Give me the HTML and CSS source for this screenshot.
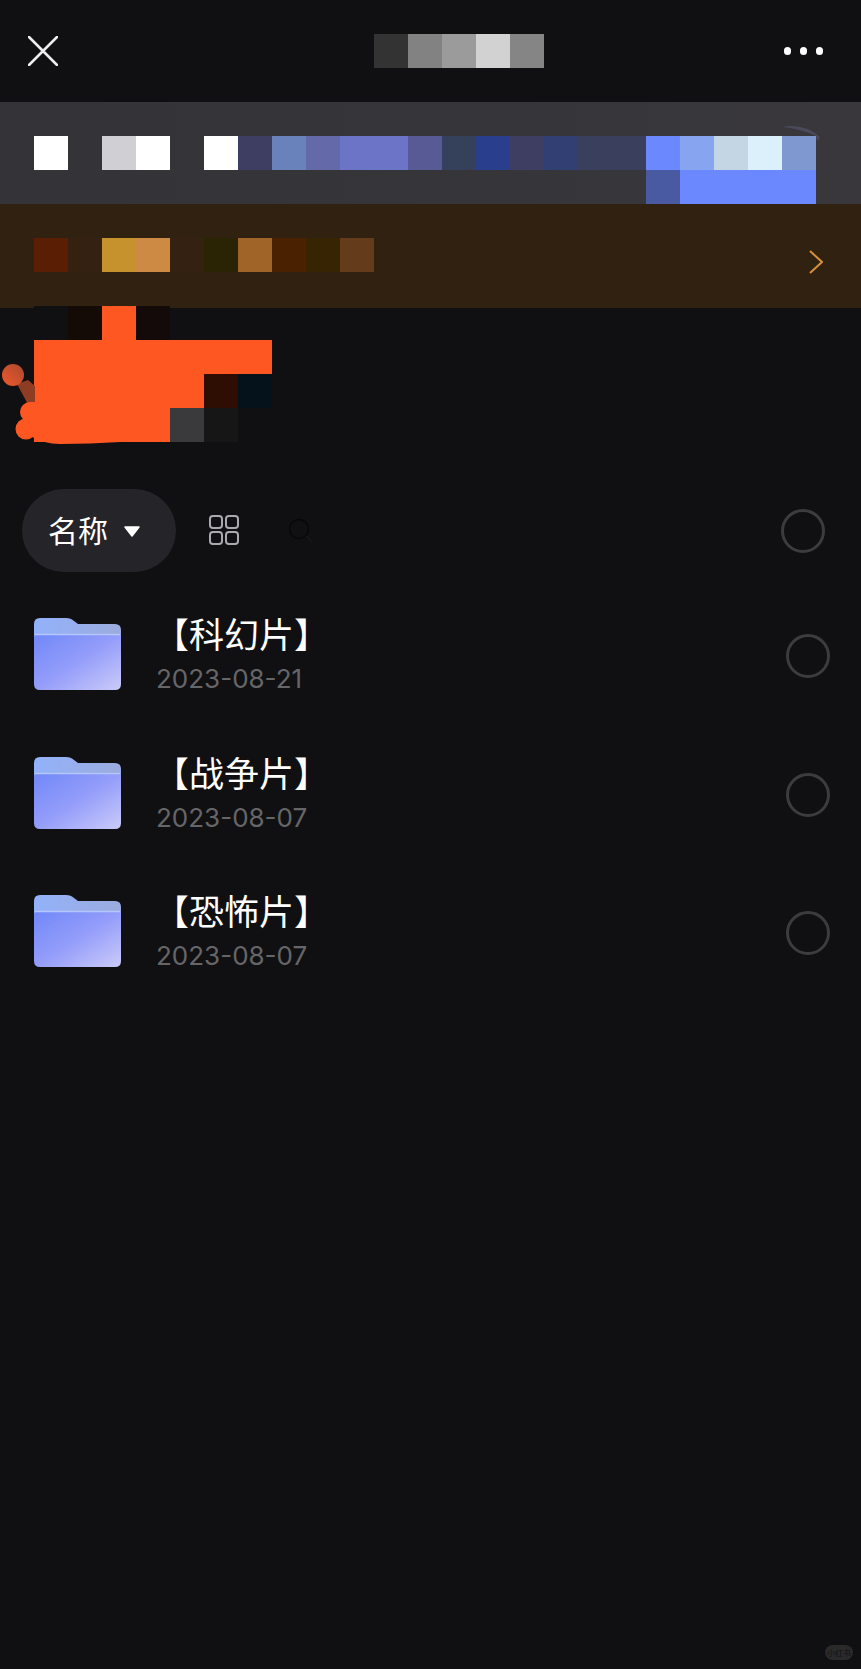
FILE: index.html
```html
<!DOCTYPE html>
<html lang="zh">
<head>
<meta charset="utf-8">
<title>文件夹</title>
<link rel="stylesheet" href="styles.css">
</head>
<body>
<div class="page">
  <header class="topbar">
    <svg class="close" viewBox="0 0 30 30" aria-hidden="true"><path d="M1 1 29 29M29 1 1 29"/></svg>
    <div class="mosaic title-mosaic">
      <i class="g1"></i><i class="g2"></i><i class="g3"></i><i class="g4"></i><i class="g5"></i>
    </div>
    <div class="dots"><b></b><b></b><b></b></div>
  </header>

  <section class="banner banner-grey">
    <div class="mosaic-stack">
      <div class="mosaic">
        <i class="w"></i><i></i><i class="s1"></i><i class="w"></i><i></i><i class="w"></i>
        <i class="b1"></i><i class="b2"></i><i class="b3"></i><i class="b4"></i><i class="b4"></i><i class="b5"></i>
        <i class="b6"></i><i class="b7"></i><i class="b1"></i><i class="b8"></i><i class="b9"></i><i class="b9"></i>
        <i class="b10"></i><i class="b11"></i><i class="b12"></i><i class="b13"></i><i class="b14"></i>
      </div>
      <div class="mosaic second-row">
        <i class="b15"></i><i class="b10"></i><i class="b10"></i><i class="b10"></i><i class="b10"></i>
      </div>
    </div>
    <svg class="arc" viewBox="0 0 40 20" aria-hidden="true"><path d="M0 2Q22 -2 38 12L35 16 34 11Q20 4 0 2Z"/></svg>
  </section>

  <section class="banner banner-brown">
    <div class="mosaic">
      <i class="o1"></i><i class="o0"></i><i class="o2"></i><i class="o3"></i><i class="o0"></i><i class="o4"></i><i class="o5"></i><i class="o6"></i><i class="o7"></i><i class="o8"></i>
    </div>
    <svg class="chevron" viewBox="0 0 14 24" aria-hidden="true"><path d="M1 1 13 12 1 23"/></svg>
  </section>

  <section class="redacted">
    <svg class="scribble" viewBox="0 0 120 90" aria-hidden="true">
      <defs>
        <linearGradient id="blob-fade" x1="0" y1="1" x2="1" y2="0">
          <stop offset="0" stop-color="#f0582a"/><stop offset="1" stop-color="#a84a30"/>
        </linearGradient>
      </defs>
      <path d="M17 22 28 18 35 24V48H31Z" class="blob-tail"/>
      <circle cx="13" cy="13" r="11" fill="url(#blob-fade)"/>
      <circle cx="30" cy="50" r="10" class="blob"/>
      <circle cx="26" cy="67" r="10.500" class="blob"/>
      <path d="M30 40H120V80Q90 82 60 82Q44 82 30 74Z" class="blob"/>
    </svg>
    <div class="mosaic"><i class="n0"></i><i class="n6"></i><i class="r"></i><i class="n1"></i></div>
    <div class="mosaic"><i class="r"></i><i class="r"></i><i class="r"></i><i class="r"></i><i class="r"></i><i class="r"></i><i class="r"></i></div>
    <div class="mosaic"><i class="r"></i><i class="r"></i><i class="r"></i><i class="r"></i><i class="r"></i><i class="n2"></i><i class="n3"></i></div>
    <div class="mosaic"><i class="r"></i><i class="r"></i><i class="r"></i><i class="r"></i><i class="r2"></i><i class="n4"></i></div>
  </section>

  <section class="toolbar">
    <div class="sort-pill">
      <span class="sort-label">名称</span>
      <svg class="caret" viewBox="0 0 18 11" aria-hidden="true"><path d="M2 1H16L9 10Z"/></svg>
    </div>
    <svg class="grid-icon" viewBox="0 0 30 30" aria-hidden="true">
      <rect x="1" y="1" width="12" height="12" rx="3"/><rect x="17" y="1" width="12" height="12" rx="3"/>
      <rect x="1" y="17" width="12" height="12" rx="3"/><rect x="17" y="17" width="12" height="12" rx="3"/>
    </svg>
    <svg class="search-icon" viewBox="0 0 28 28" aria-hidden="true"><circle cx="12" cy="12" r="9.500"/><path d="M19 19 25 25"/></svg>
    <span class="radio toolbar-radio"></span>
  </section>

  <ul class="list">
    <li class="row">
      <svg class="folder" viewBox="0 0 87 72" aria-hidden="true"><use href="#folder-shape"/></svg>
      <div class="meta"><div class="name">【科幻片】</div><div class="date">2023-08-21</div></div>
      <span class="radio"></span>
    </li>
    <li class="row">
      <svg class="folder" viewBox="0 0 87 72" aria-hidden="true"><use href="#folder-shape"/></svg>
      <div class="meta"><div class="name">【战争片】</div><div class="date">2023-08-07</div></div>
      <span class="radio"></span>
    </li>
    <li class="row">
      <svg class="folder" viewBox="0 0 87 72" aria-hidden="true"><use href="#folder-shape"/></svg>
      <div class="meta"><div class="name">【恐怖片】</div><div class="date">2023-08-07</div></div>
      <span class="radio"></span>
    </li>
  </ul>

  <div class="watermark">小红书</div>

  <svg class="defs" width="0" height="0" aria-hidden="true">
    <defs>
      <linearGradient id="fold-back" x1="0" y1="0" x2="1" y2="0">
        <stop offset="0" stop-color="#93b2fb"/><stop offset="1" stop-color="#9babdd"/>
      </linearGradient>
      <linearGradient id="fold-front" x1="0" y1="0" x2="1" y2="1">
        <stop offset="0" stop-color="#7088f8"/><stop offset="0.5" stop-color="#949dfa"/><stop offset="1" stop-color="#cbcbf9"/>
      </linearGradient>
      <g id="folder-shape">
        <path fill="url(#fold-back)" d="M0 6Q0 0 6 0H32Q37 0 40 3L44 6H81Q87 6 87 12V30H0Z"/>
        <path fill="url(#fold-front)" d="M0 20Q0 16 5 16H82Q87 16 87 20V66Q87 72 81 72H6Q0 72 0 66Z"/>
        <path fill="none" stroke="#b4c6fb" stroke-width="1.500" d="M1 16.500H86"/>
      </g>
    </defs>
  </svg>
</div>
</body>
</html>
```
FILE: styles.css
```css
* { box-sizing: border-box; }
html, body { margin: 0; padding: 0; background: #101012; }
.page {
  position: relative;
  width: 861px;
  height: 1669px;
  overflow: hidden;
  background: #101012;
  color: #fff;
  font-family: "Inter", "Noto Sans CJK SC", sans-serif;
}

/* mosaic blocks: each cell is 34px */
.mosaic { display: flex; height: 34px; }
.mosaic i { display: block; flex: 0 0 34px; height: 34px; }

.g1 { background: #333334; }
.g2 { background: #828282; }
.g3 { background: #9b9b9b; }
.g4 { background: #d2d2d2; }
.g5 { background: #858585; }

.w { background: #fff; }
.s1 { background: #cfcfd4; }
.b1 { background: #3e3e62; }
.b2 { background: #6a82bb; }
.b3 { background: #6369a9; }
.b4 { background: #6c74c8; }
.b5 { background: #585a96; }
.b6 { background: #35405a; }
.b7 { background: #2a3e8e; }
.b8 { background: #323f72; }
.b9 { background: #3a3f5e; }
.b10 { background: #6c88ff; }
.b11 { background: #86a4f0; }
.b12 { background: #c4d6e4; }
.b13 { background: #dcf0fc; }
.b14 { background: #8098d0; }
.b15 { background: #4a5aa2; }

.o0 { background: #342111; }
.o1 { background: #5a1e04; }
.o2 { background: #c6922e; }
.o3 { background: #cc8a44; }
.o4 { background: #2a2404; }
.o5 { background: #a06428; }
.o6 { background: #4a2202; }
.o7 { background: #362402; }
.o8 { background: #643c1c; }

.r { background: #ff5722; }
.r2 { background: #3a3a3c; }
.n0 { background: #101012; }
.n1 { background: #140a0a; }
.n2 { background: #2e0e02; }
.n3 { background: #05121c; }
.n4 { background: #161616; }
.n6 { background: #140a06; }

/* top bar */
.topbar {
  position: relative;
  display: flex;
  align-items: center;
  justify-content: space-between;
  height: 102px;
  padding: 0 38px 0 28px;
  background: #101012;
}
.close { width: 30px; height: 30px; }
.close path { fill: none; stroke: #eee; stroke-width: 2.500; stroke-linecap: round; }
.title-mosaic { position: absolute; left: 374px; top: 34px; }
.dots { display: flex; gap: 8.500px; }
.dots b { display: block; width: 7.500px; height: 7.500px; border-radius: 50%; background: #fff; }

/* banners */
.banner { position: relative; display: flex; }
.banner-grey {
  height: 102px;
  padding: 34px 0 0 34px;
  background: linear-gradient(90deg, #333338 0%, #36363a 60%, #39373b 100%);
}
.mosaic-stack { display: flex; flex-direction: column; }
.second-row { margin-left: 612px; }
.arc { position: absolute; left: 782px; top: 23px; width: 40px; height: 20px; }
.arc path { fill: #4a4a5c; }

.banner-brown {
  height: 104px;
  padding: 34px 0 0 34px;
  background: #312110;
}
.chevron { position: absolute; left: 809px; top: 46px; width: 14px; height: 24px; }
.chevron path { fill: none; stroke: #d8913a; stroke-width: 2; }

/* redacted block */
.redacted {
  position: relative;
  margin-top: -2px;
  padding-left: 34px;
}
.scribble { position: absolute; left: 0; top: 56px; width: 120px; height: 90px; }
.blob { fill: #ff5722; }
.blob-tail { fill: #8e3c24; }

/* toolbar */
.toolbar {
  display: flex;
  align-items: center;
  height: 83px;
  margin-top: 47px;
  padding-left: 22px;
}
.sort-pill {
  display: flex;
  align-items: center;
  width: 154px;
  height: 83px;
  padding-left: 26px;
  border-radius: 42px;
  background: #252429;
  font-family: "Noto Sans CJK SC", sans-serif;
  font-size: 30px;
}
.sort-label { margin-top: -3px; }
.caret { width: 18px; height: 11px; margin-left: 15px; margin-top: 1px; }
.caret path { fill: #fff; stroke: #fff; stroke-width: 1.500; stroke-linejoin: round; }
.grid-icon { width: 30px; height: 30px; margin-left: 33px; margin-top: -2px; }
.grid-icon rect { fill: none; stroke: #aaaaae; stroke-width: 2; }
.search-icon { width: 28px; height: 28px; margin-left: 48px; margin-top: 1px; }
.search-icon circle { fill: none; stroke: #08080a; stroke-width: 1.500; }
.search-icon path { fill: none; stroke: #161618; stroke-width: 1.500; }
.radio {
  display: block;
  flex: none;
  width: 44px;
  height: 44px;
  margin-top: 4px;
  margin-left: auto;
  margin-right: 31px;
  border: 3.500px solid #3c3c3e;
  border-radius: 50%;
}
.toolbar-radio { margin-top: 0; margin-right: 36px; }

/* list */
.list { list-style: none; margin: 13px 0 0; padding: 0; }
.row {
  display: flex;
  align-items: center;
  height: 138.500px;
  padding-left: 34px;
}
.folder { flex: none; width: 87px; height: 72px; }
.meta { margin-left: 35px; }
.name {
  height: 48px;
  margin-left: -2px;
  font-family: "Noto Sans CJK SC", sans-serif;
  font-size: 35px;
  line-height: 48px;
}
.date {
  margin-top: 2px;
  font-size: 26px;
  line-height: 40px;
  color: #666668;
}

.watermark {
  position: absolute;
  left: 825px;
  top: 1645px;
  width: 28px;
  height: 15px;
  border-radius: 8px;
  background: #2a2a2b;
  color: #101012;
  font-family: "Noto Sans CJK SC", sans-serif;
  font-size: 8px;
  line-height: 15px;
  text-align: center;
}
.defs { position: absolute; }
```
